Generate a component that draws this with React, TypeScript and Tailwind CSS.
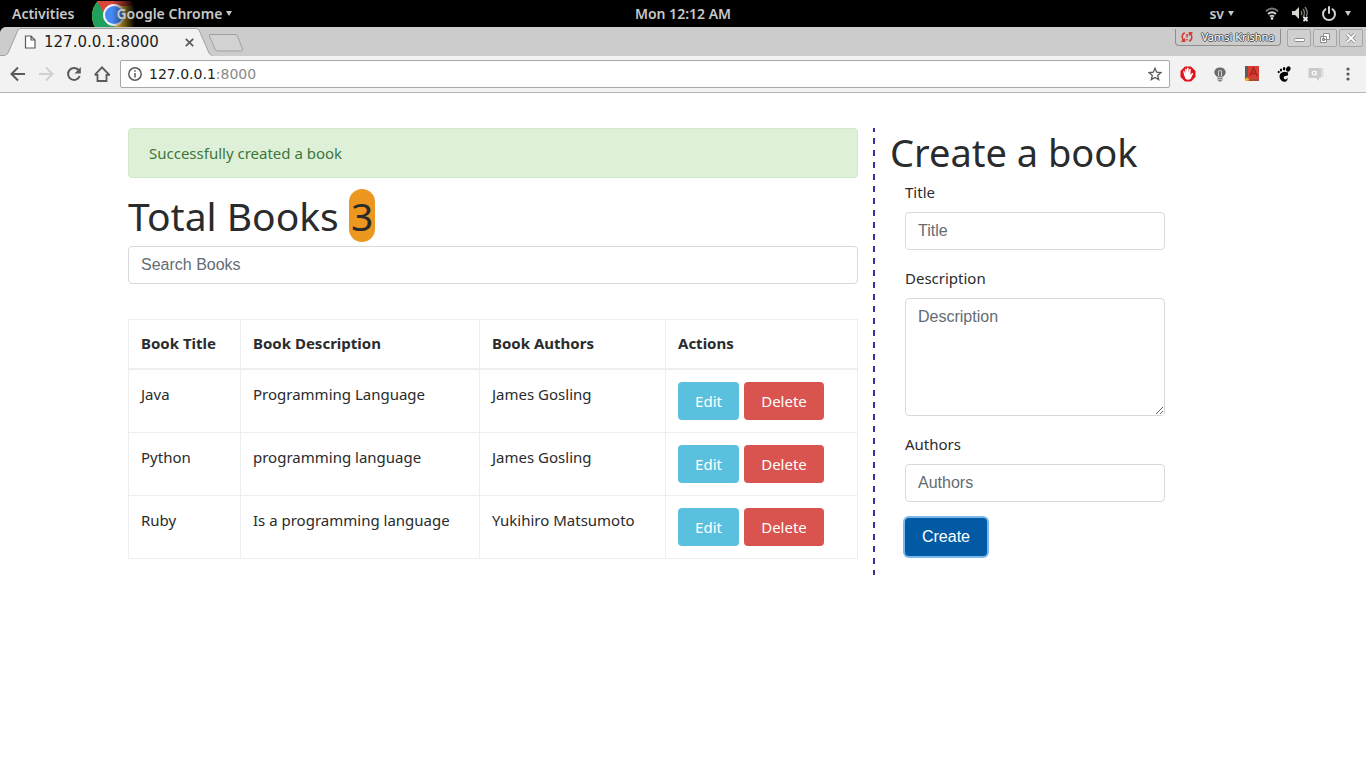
import { ReactNode } from "react";

const books = [
  { title: "Java", description: "Programming Language", authors: "James Gosling" },
  { title: "Python", description: "programming language", authors: "James Gosling" },
  { title: "Ruby", description: "Is a programming language", authors: "Yukihiro Matsumoto" },
];

const field =
  "block w-full rounded border border-[#d9d9d9] bg-white px-3 font-['Liberation_Sans',sans-serif] text-base leading-5 text-[#464a4c] placeholder:text-[#636c72] placeholder:opacity-100";

function Caret() {
  return (
    <svg width="6" height="5" viewBox="0 0 6 5" fill="#c8c8c8" aria-hidden="true">
      <path d="M0 0h6L3 5z" />
    </svg>
  );
}

function ChromeLogo() {
  return (
    <svg className="h-[26px] w-11 shrink-0" viewBox="0 0 44 26" aria-hidden="true">
      <defs>
        <linearGradient id="fade" gradientUnits="userSpaceOnUse" x1="20" x2="43" y1="0" y2="0">
          <stop offset="0" stopColor="#000" stopOpacity="0" />
          <stop offset="0.45" stopColor="#000" stopOpacity="0.45" />
          <stop offset="1" stopColor="#000" />
        </linearGradient>
        <clipPath id="disc">
          <circle cx="22" cy="15" r="22" />
        </clipPath>
      </defs>
      <g clipPath="url(#disc)">
        <path d="M0 0h44v26H0z" fill="#f7c52b" />
        <path d="M0 0h6l9 16 8 10H0z" fill="#1fa15d" />
        <path d="M5 0h39v5H22l-9 9z" fill="#d9473c" />
        <circle cx="22" cy="14" r="11" fill="#f4f4f4" />
        <circle cx="22" cy="14" r="9" fill="#4688f4" />
      </g>
      <path d="M20 0h24v26H20z" fill="url(#fade)" />
    </svg>
  );
}

function TopBar() {
  return (
    <header className="grid h-[27px] grid-cols-3 items-center bg-black font-['Noto_Sans',sans-serif] text-sm font-semibold leading-5 text-[#c8c8c8]">
      <div className="flex items-center pl-3">
        <button className="mr-[18px]">Activities</button>
        <ChromeLogo />
        <button className="z-10 -ml-5 flex items-center gap-1">
          Google Chrome <Caret />
        </button>
      </div>
      <div className="text-center">Mon 12:12 AM</div>
      <div className="flex items-center justify-end pr-[15px]">
        <button className="mr-[31px] flex items-center gap-1">
          sv <Caret />
        </button>
        <svg className="mr-[13px]" width="14" height="13" viewBox="0 0 14 13" fill="none" stroke="#d3d7cf" aria-hidden="true">
          <path d="M1 4.200Q7-1.200 13 4.200" stroke="#777" strokeWidth="2" />
          <path d="M3 7Q7 3.400 11 7M5 9.500Q7 7.800 9 9.500" strokeWidth="1.800" />
          <circle cx="7" cy="11.500" r="1.400" fill="#d3d7cf" stroke="none" />
        </svg>
        <svg className="mr-3" width="17" height="16" viewBox="0 0 17 16" fill="none" aria-hidden="true">
          <path d="M0 5h3l4-4v12L3 9H0z" fill="#d3d7cf" />
          <path d="M9 5q1.500 2 0 4M11 3q3 4 0 8M13 1q4 6 1 9" stroke="#777" strokeWidth="1.400" />
          <path d="m11.500 11 4 4m0-4-4 4" stroke="#eee" strokeWidth="1.800" />
        </svg>
        <svg className="mr-2" width="16" height="16" viewBox="0 0 16 16" fill="none" stroke="#d3d7cf" strokeWidth="2" strokeLinecap="round" aria-hidden="true">
          <path d="M4.500 3.200a6 6 0 1 0 7 0M8 1v6" />
        </svg>
        <Caret />
      </div>
    </header>
  );
}

function WindowButton({ label, children }: { label: string; children: ReactNode }) {
  return (
    <button aria-label={label} className="flex h-[18px] w-6 items-center justify-center rounded-[2px] border border-[#a6a6a6] bg-[#d0d0d0]">
      <svg width="14" height="12" viewBox="0 0 14 12" fill="none" stroke="#8b8b8b" aria-hidden="true">
        {children}
      </svg>
    </button>
  );
}

function TabStrip() {
  return (
    <div className="flex h-[29px] justify-between bg-[#cccccc]">
      <div className="flex">
        <div className="relative h-[29px] w-[212px]">
          <svg className="absolute inset-0" width="248" height="29" viewBox="0 0 248 29" aria-hidden="true">
            <path d="M0 0h5Q1 1 0 5z" fill="#000" />
            <path d="M0 28.500h5Q7 28 8 26L18 3Q19 1.500 21 1.500H196Q198 1.500 199 3L209 26Q210 28 212 28.500" fill="#f2f2f2" stroke="#a0a0a0" />
            <path d="M5.500 29H211z" stroke="#f2f2f2" strokeWidth="2" />
            <path d="M210 7.500H235Q237 7.500 237.500 9L242.500 22Q243 24 241 24H218Q216 24 215 22L209.500 9.500Q209 7.500 210 7.500Z" fill="#d2d2d2" stroke="#a0a0a0" />
          </svg>
          <div className="relative flex h-full items-center pl-6 pt-px">
            <svg width="12" height="14" viewBox="0 0 12 14" fill="#fff" stroke="#5a5a5a" strokeWidth="1.200" aria-hidden="true">
              <path d="M1.500 1h5.500l4 4v8h-9.500zM7 1v4h4" />
            </svg>
            <span className="ml-2 font-['DejaVu_Sans',sans-serif] text-[15px] leading-5 text-[#222]">127.0.0.1:8000</span>
            <button aria-label="Close tab" className="ml-[26px]">
              <svg width="9" height="9" viewBox="0 0 9 9" stroke="#5a5a5a" strokeWidth="1.700" aria-hidden="true">
                <path d="m.8.8 7.400 7.400m0-7.400L.8 8.200" />
              </svg>
            </button>
          </div>
        </div>
        <button aria-label="New tab" className="w-9" />
      </div>
      <div className="flex items-start gap-[2px] pr-[3px] pt-[2px]">
        <button className="mr-1 flex h-[17px] w-[106px] items-center justify-center gap-2 rounded-b border border-t-0 border-[#8e8e8e] bg-[#cbcbcb] font-['Noto_Sans',sans-serif] text-[11px] leading-4 text-white [text-shadow:1px_0_0_#555,-1px_0_0_#555,0_1px_0_#555,0_-1px_0_#555]">
          <svg width="12" height="12" viewBox="0 0 12 12" fill="none" stroke="#d43c31" strokeWidth="1.500" aria-hidden="true">
            <path d="M3.800 1.800Q1 3 1.200 6T3.200 10M.5 10.200h3V7.600M8.200 10.200Q11 9 10.800 6T8.800 2M11.500 1.800h-3v2.600M6 3v3.500M6 8v1.500" />
          </svg>
          Vamsi Krishna
        </button>
        <WindowButton label="Minimize"><rect x="2.500" y="6.500" width="10" height="3" rx="1" fill="#fff" /></WindowButton>
        <WindowButton label="Restore"><path d="M5.500 1.500h6v6h-6zM2.500 4.500h6v6h-6z" fill="#fff" /><path d="M4.500 6.500h2v2h-2z" /></WindowButton>
        <WindowButton label="Close"><path d="m3 2 8 8m0-8-8 8" strokeWidth="3.500" /><path d="m3 2 8 8m0-8-8 8" stroke="#fff" strokeWidth="1.800" /></WindowButton>
      </div>
    </div>
  );
}

function Toolbar() {
  return (
    <div className="flex h-[37px] items-center border-b border-[#b6b6b6] bg-[#f2f2f2]">
      <div className="flex w-[120px] items-center gap-3 pl-[10px]">
        <button aria-label="Back">
          <svg width="16" height="16" viewBox="0 0 16 16" fill="none" stroke="#5a5a5a" strokeWidth="2"><path d="M15 8H2m6-6.500L1.500 8 8 14.500" /></svg>
        </button>
        <button aria-label="Forward">
          <svg width="16" height="16" viewBox="0 0 16 16" fill="none" stroke="#d0d0d0" strokeWidth="2"><path d="M1 8h13M8 1.500 14.500 8 8 14.500" /></svg>
        </button>
        <button aria-label="Reload">
          <svg width="16" height="16" viewBox="0 0 16 16" fill="none" stroke="#5a5a5a" strokeWidth="2"><path d="M13 4.500A6 6 0 1 0 13.700 10" /><path d="M14.800 1v6.500H8.500z" fill="#5a5a5a" stroke="none" /></svg>
        </button>
        <button aria-label="Home">
          <svg width="16" height="16" viewBox="0 0 16 16" fill="none" stroke="#5a5a5a" strokeWidth="1.800"><path d="M3.500 8v7h9V8M.8 8.800 8 1.300l7.200 7.500H13M.8 8.800H3" /></svg>
        </button>
      </div>
      <div className="flex h-7 flex-1 items-center rounded-[2px] border border-[#a8a8a8] bg-white px-[7px]">
        <svg width="14" height="14" viewBox="0 0 14 14" fill="none" stroke="#5a5a5a" strokeWidth="1.500" aria-hidden="true"><circle cx="7" cy="7" r="6.200" /><path d="M7 6v4.500M7 3.200v1.600" /></svg>
        <a href="#address" className="ml-[7px] font-['DejaVu_Sans',sans-serif] text-sm leading-5 text-[#222]">
          127.0.0.1<span className="text-[#888]">:8000</span>
        </a>
        <button aria-label="Bookmark" className="ml-auto">
          <svg width="14" height="14" viewBox="0 0 14 14" fill="none" stroke="#5a5a5a" strokeWidth="1.300"><path d="m7 1.300 1.700 3.900 4.200.4-3.200 2.800 1 4.200L7 10.400l-3.700 2.200 1-4.200-3.200-2.800 4.200-.4z" /></svg>
        </button>
      </div>
      <div className="flex items-center gap-4 pl-[10px] pr-[10px]">
        <button aria-label="Content blocker">
          <svg width="16" height="16" viewBox="0 0 16 16"><path d="M5 .5h6L15.500 5v6L11 15.500H5L.5 11V5z" fill="#e0141c" /><path d="M4 9 3.200 5.200q.8-1 1.400.2l.6 2-.1-4.400q.9-1 1.500.1l.2 3.400.3-4.500q.9-.9 1.500.2l.1 4.300.7-3.500q1.100-.7 1.400.4L10.400 9l1.400-1.700q1.300-.6 1.300.5L10.600 13q-2.600 1.500-5 0z" fill="#fff" /></svg>
        </button>
        <button aria-label="Lights">
          <svg width="16" height="16" viewBox="0 0 16 16"><path d="M4.500 10.500Q2 8.500 2.300 5.800 3.300 1.400 8 1.400t5.700 4.400Q14 8.500 11.500 10.500z" fill="#6b6b6b" /><path d="M6.500 10.500V6.800Q5.500 4.500 8 4.500t1.500 2.300v3.700" fill="none" stroke="#d8d8d8" /><path d="M5.500 10h5v4l-1.500 1.500H7L5.500 14z" fill="#808080" /><path d="M5.500 11.500h5m-5 2h5" stroke="#c4c4c4" /></svg>
        </button>
        <button aria-label="Dictionary">
          <svg width="16" height="16" viewBox="0 0 16 16"><path d="M1 0h14v13H1z" fill="#d83c32" /><path d="M1 0h3v13H1z" fill="#5c5a5a" /><path d="m6 10 3.500-8L13 10M7.300 7.500h4.500" fill="none" stroke="#a5251e" strokeWidth="1.600" /><path d="M2 13h13v2H2z" fill="#a8483b" /><path d="m3 11 1 1.500 1.800.2-1.300 1.200.4 1.600L3 14.800l-1.900.7.400-1.600L.2 12.700l1.800-.2z" fill="#f5b41c" /></svg>
        </button>
        <button aria-label="Shell extensions">
          <svg width="16" height="16" viewBox="0 0 16 16"><ellipse cx="12.300" cy="3" rx="2.100" ry="2.700" transform="rotate(25 12.300 3)" /><ellipse cx="8.100" cy="2.800" rx="1.300" ry="1.700" /><ellipse cx="5" cy="4" rx="1.100" ry="1.500" /><ellipse cx="2.700" cy="6" rx="1" ry="1.300" /><path d="M12 6.500Q7.500 4.700 4.500 7.500q-2 3 0 6 2.200 3 5.500 1.900 2-1 1.500-4-.5 2-2.400 2-1.800-.5-1.300-2.300.5-1 2.200-1 2.900 0 2-3.600z" /></svg>
        </button>
        <button aria-label="Chat">
          <svg width="16" height="16" viewBox="0 0 16 16"><path d="M11 2h4.500v9H13z" fill="#ddd" /><path d="M1.500 2H12q1 0 1 1v8q0 1-1 1H11v3l-3-3H1.500Q.5 12 .5 11V3q0-1 1-1z" fill="#cbcbcb" /><circle cx="6.200" cy="7" r="1.900" fill="none" stroke="#f8f8f8" strokeWidth="1.200" /><path d="M8.200 5v4.300" stroke="#f8f8f8" /></svg>
        </button>
        <button aria-label="Menu">
          <svg width="16" height="16" viewBox="0 0 16 16" fill="#5a5a5a"><circle cx="8" cy="3" r="1.600" /><circle cx="8" cy="8" r="1.600" /><circle cx="8" cy="13" r="1.600" /></svg>
        </button>
      </div>
    </div>
  );
}

function BookList() {
  return (
    <section className="min-w-0 flex-1">
      <div role="status" className="rounded border border-[#d0e9c6] bg-[#dff0d8] px-5 py-3 leading-6 text-[#3c763d]">
        Successfully created a book
      </div>
      <h1 className="mb-2 mt-4 text-[39px] leading-[44px]">
        Total Books <span className="rounded-[13px] bg-[#ec971f] px-[2px]">3</span>
      </h1>
      <input type="search" aria-label="Search Books" placeholder="Search Books" className={`${field} h-[38px]`} />
      <table className="mt-[35px] w-full table-fixed border-collapse border border-[#eceeef] text-left">
        <colgroup>
          <col className="w-[112px]" />
          <col className="w-[239px]" />
          <col className="w-[186px]" />
          <col />
        </colgroup>
        <thead>
          <tr className="h-[49px] border-b-2 border-[#eceeef] align-top">
            {["Book Title", "Book Description", "Book Authors", "Actions"].map((name) => (
              <th key={name} className="border-x border-[#eceeef] px-3 py-[11px] font-bold">{name}</th>
            ))}
          </tr>
        </thead>
        <tbody>
          {books.map((book) => (
            <tr key={book.title} className="align-top">
              <td className="border border-[#eceeef] p-3">{book.title}</td>
              <td className="border border-[#eceeef] p-3">{book.description}</td>
              <td className="border border-[#eceeef] p-3">{book.authors}</td>
              <td className="border border-[#eceeef] p-3">
                <div className="flex gap-[5px]">
                  <button className="h-[38px] w-[61px] rounded bg-[#5bc0de] text-white">Edit</button>
                  <button className="h-[38px] w-20 rounded bg-[#d9534f] text-white">Delete</button>
                </div>
              </td>
            </tr>
          ))}
        </tbody>
      </table>
    </section>
  );
}

function CreateForm() {
  return (
    <section className="flex shrink-0">
      <svg className="w-[2px] shrink-0 self-stretch" aria-hidden="true">
        <line x1="1" y1="-2" x2="1" y2="100%" stroke="#333399" strokeWidth="2" strokeDasharray="6 6" />
      </svg>
      <div className="w-[305px] pb-[19px] pl-[15px]">
        <h1 className="mb-1 text-[38px] leading-[48px]">Create a book</h1>
        <form className="px-[15px]" onSubmit={(event) => event.preventDefault()}>
          <label htmlFor="title" className="mb-2 block leading-6">Title</label>
          <input id="title" placeholder="Title" className={`${field} mb-4 h-[38px]`} />
          <label htmlFor="description" className="mb-2 block leading-6">Description</label>
          <textarea id="description" placeholder="Description" className={`${field} mb-4 h-[118px] resize py-2`} />
          <label htmlFor="authors" className="mb-2 block leading-6">Authors</label>
          <input id="authors" placeholder="Authors" className={`${field} mb-4 h-[38px]`} />
          <button type="submit" className="block h-[38px] w-[82px] rounded bg-[#025aa5] font-['Liberation_Sans',sans-serif] text-base text-white ring-2 ring-[#7ab8ee]">Create</button>
        </form>
      </div>
    </section>
  );
}

export default function App() {
  return (
    <div className="min-h-screen bg-white font-['Noto_Sans',sans-serif] text-[15px] leading-6 text-[#292b2c]">
      <TopBar />
      <TabStrip />
      <Toolbar />
      <main className="mx-auto max-w-[1110px] pr-[58px] pt-[35px]">
        <div className="flex items-start gap-[15px]">
          <BookList />
          <CreateForm />
        </div>
      </main>
    </div>
  );
}
